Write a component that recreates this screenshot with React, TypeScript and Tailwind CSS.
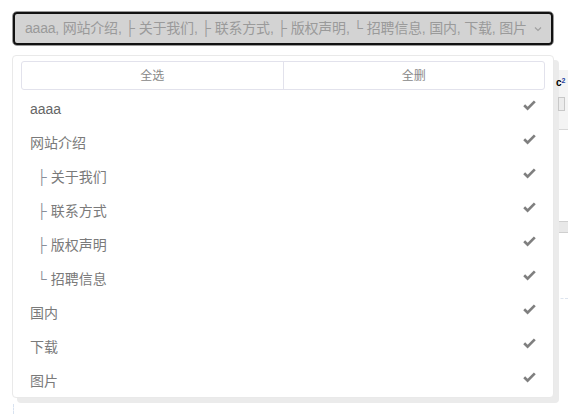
import React from "react";

const items: { label: string; sub?: boolean; prefix?: string }[] = [
  { label: "aaaa" },
  { label: "网站介绍" },
  { label: "关于我们", sub: true, prefix: "├" },
  { label: "联系方式", sub: true, prefix: "├" },
  { label: "版权声明", sub: true, prefix: "├" },
  { label: "招聘信息", sub: true, prefix: "└" },
  { label: "国内" },
  { label: "下载" },
  { label: "图片" },
];

const font = { fontFamily: '"Liberation Sans", "Noto Sans CJK SC", sans-serif' };

function Check() {
  return (
    <svg width="13" height="11" viewBox="0 0 13 11" className="shrink-0">
      <polyline
        points="1.2,5.2 4.6,8.6 11.8,1.4"
        fill="none"
        stroke="#7f7f7f"
        strokeWidth="2.7"
        strokeLinecap="butt"
        strokeLinejoin="miter"
      />
    </svg>
  );
}

export default function App() {
  return (
    <div className="relative w-[568px] h-[414px] bg-white overflow-hidden" style={font}>
      {/* background page content peeking out at right */}
      <div className="absolute left-[556px] top-[70px] w-[12px] h-[60px] bg-[#f4f4f4] border-b border-[#d8d8d8]" />
      <div className="absolute z-10 left-[556px] top-[78px] text-[10px] leading-none font-bold text-black">
        c<sup className="text-[7px] text-[#2040a0]">2</sup>
      </div>
      <div className="absolute z-10 left-[558px] top-[97px] w-[7px] h-[14px] border border-[#c8c8c8] bg-[#ececec]" />
      <div className="absolute left-[556px] top-[221px] w-[12px] h-[12px] bg-[#e8e8e8] border-y border-[#cfcfcf]" />
      <div className="absolute left-[556px] top-[298px] w-[12px] border-t border-dashed border-[#dde4ee]" />
      <div className="absolute left-[13px] top-[404px] h-[10px] border-l border-dashed border-[#d8e2f0]" />

      <div className="px-3 pt-[11px]">
        {/* select box */}
        <div className="h-[35px] w-[542px] rounded-[5px] border border-[#9a9a9a]">
          <div className="h-full rounded-[4px] border-2 border-[#111] bg-[#d3d3d3] flex items-center pl-[10px] pr-[9px]">
            <div className="flex-1 overflow-hidden whitespace-nowrap text-[14px] text-[#9a9a9a] tracking-[-0.2px]">
              aaaa, 网站介绍, ├ 关于我们, ├ 联系方式, ├ 版权声明, └ 招聘信息, 国内, 下载, 图片
            </div>
            <svg width="8" height="6" viewBox="0 0 8 6" className="ml-[2px]">
              <polyline points="1,1.5 4,4.5 7,1.5" fill="none" stroke="#a0a0a0" strokeWidth="1.2" />
            </svg>
          </div>
        </div>
      </div>

      {/* dropdown panel */}
      <div className="absolute left-[12px] top-[55px] w-[542px] h-[343px] rounded-[4px] border border-[#e9e9e9] bg-white shadow-[5px_5px_0_#ebebeb] px-[8px] pt-[5px]">
        <div className="flex h-[29px] rounded-[3px] border border-[#e2e2ec] text-[12px] text-[#888]">
          <div className="flex-1 flex items-center justify-center border-r border-[#e2e2ec]">全选</div>
          <div className="flex-1 flex items-center justify-center">全删</div>
        </div>
        <div className="pt-[2px]">
          {items.map((it, i) => (
            <div key={i} className="h-[34px] flex items-center pl-[9px] pr-[9px]">
              <div
                className={
                  "flex-1 text-[14px] " + (i === 0 ? "text-[#666]" : "text-[#7a7a7a]")
                }
              >
                {it.sub ? (
                  <span className="pl-[7px]">
                    <span className="text-[#8a8f99]">{it.prefix}</span> {it.label}
                  </span>
                ) : (
                  it.label
                )}
              </div>
              <div className="-mt-[8px]">
                <Check />
              </div>
            </div>
          ))}
        </div>
      </div>
    </div>
  );
}
